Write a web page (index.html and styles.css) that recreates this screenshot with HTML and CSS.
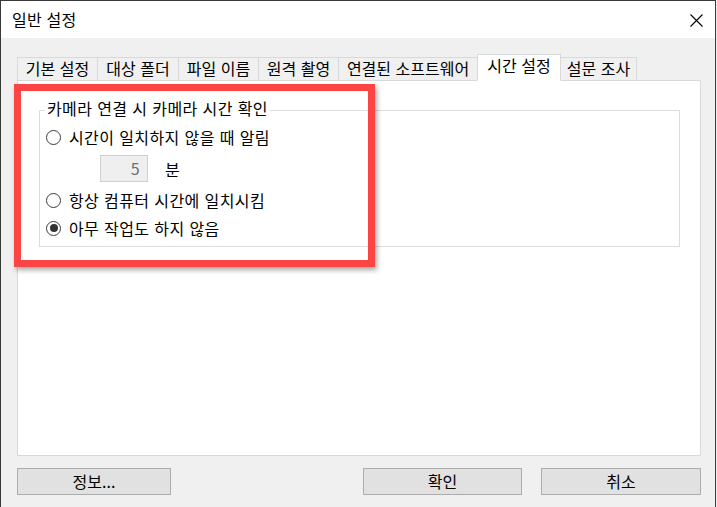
FILE: index.html
```html
<!DOCTYPE html>
<html lang="ko">
<head>
<meta charset="utf-8">
<title>일반 설정</title>
<link rel="stylesheet" href="styles.css">
</head>
<body>
<div class="window">
  <div class="titlebar">
    <span class="title">일반 설정</span>
    <svg class="close" width="13" height="13" viewBox="0 0 13 13"><path d="M0.5 0.5 L12.5 12.5 M12.5 0.5 L0.5 12.5" stroke="#000" stroke-width="1.1" fill="none"/></svg>
  </div>
  <div class="content">
    <div class="tabs">
      <div class="tab t1">기본 설정</div>
      <div class="tab t2">대상 폴더</div>
      <div class="tab t3">파일 이름</div>
      <div class="tab t4">원격 촬영</div>
      <div class="tab t5">연결된 소프트웨어</div>
      <div class="tab t6 active">시간 설정</div>
      <div class="tab t7">설문 조사</div>
    </div>
    <div class="panel">
      <div class="group">
        <div class="legend">카메라 연결 시 카메라 시간 확인</div>
        <div class="radio r1"><span class="circle"></span><span>시간이 일치하지 않을 때 알림</span></div>
        <div class="spin-row"><div class="spin">5</div><span class="unit">분</span></div>
        <div class="radio r2"><span class="circle"></span><span>항상 컴퓨터 시간에 일치시킴</span></div>
        <div class="radio r3"><span class="circle checked"></span><span>아무 작업도 하지 않음</span></div>
      </div>
    </div>
    <div class="buttons">
      <div class="btn b-info">정보...</div>
      <div class="spacer"></div>
      <div class="btn b-ok">확인</div>
      <div class="btn b-cancel">취소</div>
    </div>
  </div>
  <div class="highlight"></div>
</div>
</body>
</html>
```

FILE: styles.css
```css
html, body {
  margin: 0;
  padding: 0;
  background: #f0f0f0;
}
body {
  font-family: "Noto Sans CJK KR", "Noto Sans", sans-serif;
  font-size: 16px;
  color: #000;
}
.window {
  position: relative;
  width: 716px;
  height: 507px;
  box-sizing: border-box;
  border: 1px solid #3a3a3a;
  border-bottom: none;
  background: #f0f0f0;
  overflow: hidden;
}
.titlebar {
  height: 37px;
  background: #fff;
  display: flex;
  align-items: center;
  justify-content: space-between;
  padding: 0 12px 0 11px;
}
.title {
  line-height: 20px;
  margin-top: -1px;
  letter-spacing: 0.2px;
}
.close {
  display: block;
  margin-top: 1px;
}
.content {
  padding: 16px 14px 0 16px;
  display: flex;
  flex-direction: column;
}
.tabs {
  display: flex;
  align-items: flex-end;
  height: 27px;
  margin-bottom: -1px;
  position: relative;
  z-index: 1;
}
.tab {
  box-sizing: border-box;
  height: 24px;
  border: 1px solid #d9d9d9;
  background: #f0f0f0;
  margin-right: -1px;
  text-align: center;
  line-height: 21px;
  white-space: nowrap;
}
.tab.active {
  height: 27px;
  background: #fff;
  border-bottom-color: #fff;
  line-height: 20px;
  position: relative;
  z-index: 2;
}
.t1 { width: 81px; }
.t2 { width: 82px; }
.t3 { width: 81px; }
.t4 { width: 81px; }
.t5 { width: 140px; }
.t6 { width: 84px; }
.t7 { width: 77px; }
.panel {
  box-sizing: border-box;
  height: 376px;
  background: #fff;
  border: 1px solid #d9d9d9;
  padding: 29px 20px 0 21px;
}
.group {
  border: 1px solid #dcdcdc;
  display: flex;
  flex-direction: column;
  padding-bottom: 8px;
  letter-spacing: 0.4px;
}
.legend {
  align-self: flex-start;
  margin: -13px 0 0 5px;
  padding: 0 2px;
  background: #fff;
  line-height: 20px;
}
.radio {
  display: flex;
  align-items: center;
  height: 20px;
  margin-left: 6px;
  gap: 8px;
  line-height: 20px;
}
.r1 { margin-top: 9px; }
.r2 { margin-top: 8px; }
.r3 { margin-top: 8px; }
.circle {
  box-sizing: border-box;
  width: 15px;
  height: 15px;
  border: 1px solid #3c3c3c;
  border-radius: 50%;
  background: #fff;
  display: flex;
  align-items: center;
  justify-content: center;
  flex: none;
}
.circle.checked::after {
  content: "";
  width: 8px;
  height: 8px;
  border-radius: 50%;
  background: #333;
}
.spin-row {
  display: flex;
  align-items: center;
  margin: 8px 0 0 60px;
  gap: 17px;
}
.spin {
  box-sizing: border-box;
  width: 48px;
  height: 27px;
  border: 1px solid #cfcfcf;
  background: #efefef;
  color: #6d6d6d;
  text-align: right;
  padding-right: 7px;
  line-height: 24px;
}
.unit {
  line-height: 20px;
}
.buttons {
  display: flex;
  margin-top: 12px;
}
.btn {
  box-sizing: border-box;
  height: 27px;
  border: 1px solid #adadad;
  background: #e1e1e1;
  text-align: center;
  line-height: 24px;
}
.b-info { width: 154px; }
.spacer { flex: 1; }
.b-ok { width: 159px; margin-right: 19px; }
.b-cancel { width: 160px; }
.highlight {
  position: absolute;
  left: 13px;
  top: 83px;
  width: 361px;
  height: 183px;
  box-sizing: border-box;
  border: 7px solid #fb4444;
  box-shadow: 2px 3px 5px rgba(0, 0, 0, 0.35);
  pointer-events: none;
}
```
